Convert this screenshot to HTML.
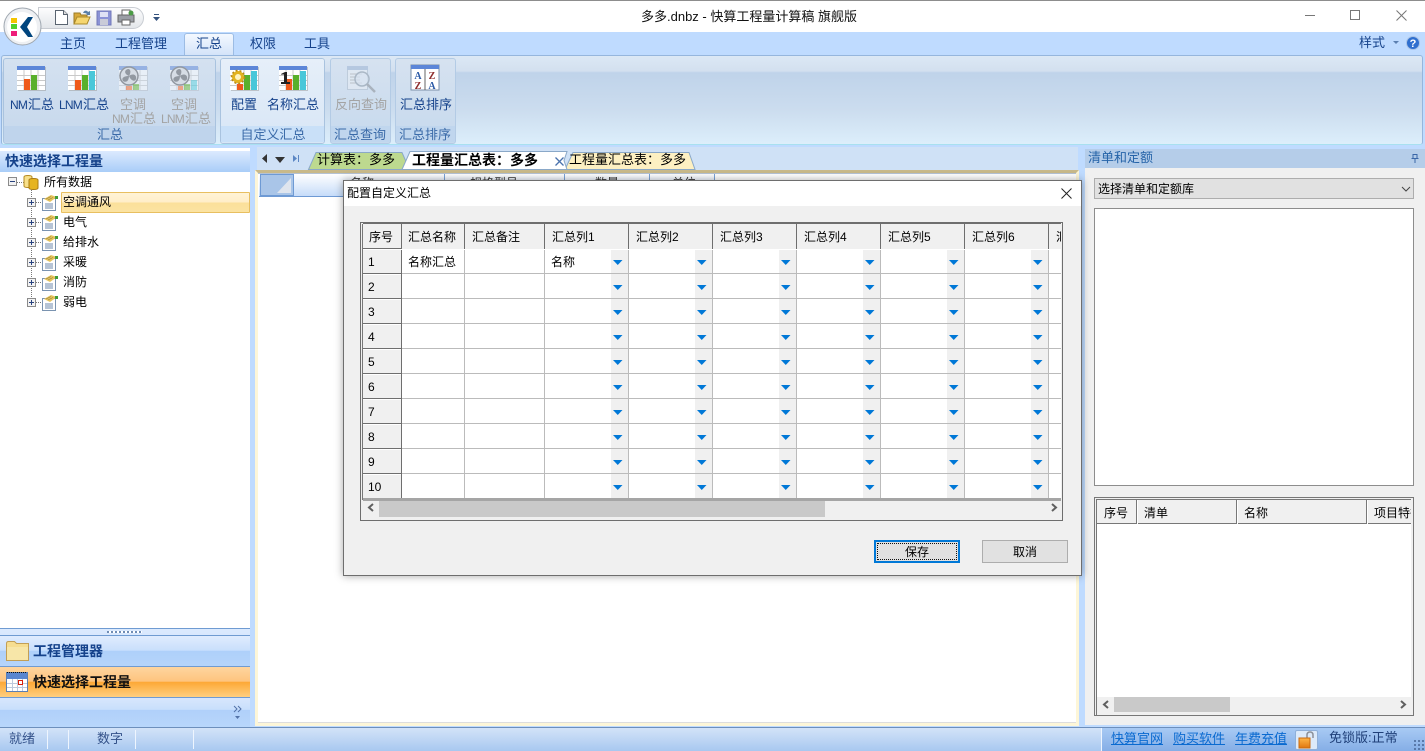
<!DOCTYPE html>
<html lang="zh"><head><meta charset="utf-8"><title>多多.dnbz</title>
<style>
html,body{margin:0;padding:0;width:1425px;height:751px;overflow:hidden;background:#bfdbff}
body{position:relative;font:12px/1 "Liberation Sans","WenQuanYi Zen Hei","Noto Sans CJK SC",sans-serif;color:#000}
.a{position:absolute}
.t{position:absolute;white-space:nowrap;line-height:14px}
.c{transform:translateX(-50%)}
.r{font-size:13px}
.r i{font-style:normal;font-size:12px;letter-spacing:-.8px;margin-right:1px}
.b{color:#15428b}
.g{color:#a3a3a3}
.h{font-weight:bold;font-size:14px;color:#15428b}
u{color:#0a6ad0}
svg{position:absolute;overflow:visible}
</style></head><body>
<svg width="0" height="0" style="left:0;top:0">
<defs>
<symbol id="tb" viewBox="0 0 29 25"><rect x="1" y="1" width="28" height="24" fill="#999" opacity=".5"/><rect width="28" height="24" fill="#fff"/><path d="M0 9.500h28M0 14.500h28M0 19.500h28M7 4v20M14 4v20M21 4v20" stroke="#c9c9c9"/><rect width="28" height="4" fill="#5c86d8"/></symbol>
<symbol id="fan" viewBox="0 0 29 25" opacity=".5"><use href="#tb" width="29" height="25"/><circle cx="10" cy="10" r="9" fill="#ddd" stroke="#555" stroke-width="1.500"/><path d="M10 10C5 8 5 4 9 3c3 0 3 4 1 7zM10 10c4-3 8-1 7 3-1 3-5 2-7-3zM10 10c0 5-3 7-6 5-2-3 1-5 6-5z" fill="#555"/></symbol>
<symbol id="tree" viewBox="0 0 16 16"><rect x=".5" y="3.500" width="13" height="12" fill="#fff" stroke="#7a93b0"/><path d="M3 9h8M3 11h8M3 13h8" stroke="#6d88ad"/><path d="M2 4 9 0 l6 2-7 5z" fill="#e6c35c"/><path d="M4 4l5-2.500M6 5l5-2.500" stroke="#97803a" stroke-width=".6"/><rect x="13" y="1" width="3" height="3" fill="#3f9b38"/></symbol>
<symbol id="plus" viewBox="0 0 9 9"><rect x=".5" y=".5" width="8" height="8" fill="#f2f2f2" stroke="#8a8a8a"/><path d="M2 4.500h5M4.500 2v5" stroke="#28427e"/></symbol>
<pattern id="cell" patternUnits="userSpaceOnUse" x="545" y="249" width="84" height="25"><rect x="66" width="17" height="25" fill="#f0f0f0"/><path d="M83.500 0v25M0 24.500h84" stroke="#bbb"/><path d="M68 11h9.500l-4.750 5z" fill="#0078d7"/></pattern>
<linearGradient id="or" x1="0" y1="0" x2="0" y2="1"><stop offset="0" stop-color="#ffb648"/><stop offset="1" stop-color="#e07710"/></linearGradient>
</defs></svg>

<!-- title bar -->
<div class="a" style="left:0;top:0;width:1425px;height:32px;background:#fff"></div>
<div class="a" style="left:0;top:0;width:1425px;height:1px;background:#8d8d8d"></div>
<div class="t" style="left:641px;top:10px;font-size:13px;color:#111">多多.dnbz - 快算工程量计算稿 旗舰版</div>
<div class="a" style="left:1305px;top:15px;width:10px;height:1px;background:#777"></div>
<div class="a" style="left:1350px;top:10px;width:8px;height:8px;border:1px solid #777"></div>
<svg style="left:1396px;top:10px" width="11" height="11"><path d="M.5.500l10 10M10.500.500l-10 10" stroke="#777" fill="none"/></svg>

<!-- tab strip -->
<div class="a" style="left:0;top:32px;width:1425px;height:25px;background:#bfdbff"></div>
<div class="a" style="left:184px;top:33px;width:48px;height:24px;background:linear-gradient(#f4f9ff,#cfe1f8);border:1px solid #9cbce4;border-bottom:0;border-radius:3px 3px 0 0"></div>
<div class="t b" style="left:60px;top:37px;font-size:13px">主页</div>
<div class="t b" style="left:115px;top:37px;font-size:13px">工程管理</div>
<div class="t b" style="left:196px;top:37px;font-size:13px">汇总</div>
<div class="t b" style="left:250px;top:37px;font-size:13px">权限</div>
<div class="t b" style="left:304px;top:37px;font-size:13px">工具</div>
<div class="t b" style="left:1359px;top:36px;font-size:13px">样式</div>
<svg style="left:1393px;top:41px" width="7" height="4"><path d="M0 0h6L3 3z" fill="#5b7fb0"/></svg>
<svg style="left:1406px;top:36px" width="15" height="15"><circle cx="7" cy="7" r="6.500" fill="#2f6fcf" stroke="#a9c3e6"/><text x="7" y="11" font-size="11" font-weight="bold" text-anchor="middle" fill="#fff" font-family="Liberation Sans">?</text></svg>

<!-- ribbon -->
<div class="a" style="left:1px;top:55px;width:1420px;height:88px;border:1px solid #96b6dd;border-radius:3px;background:linear-gradient(#dce8f5 0,#d3e0ef 17%,#bfd3ea 19%,#cbdcee 60%,#dceefb 100%);border-bottom-color:#a8e0f0"></div>

<div class="a" style="left:3px;top:58px;width:211px;height:84px;border:1px solid #a9c3df;border-radius:3px;background:linear-gradient(#d4e1f0,#c6d8ec)"></div>
<div class="a" style="left:4px;top:126px;width:211px;height:16px;background:#bfd4ec"></div>
<div class="a" style="left:220px;top:58px;width:103px;height:84px;border:1px solid #fff;outline:1px solid #a9c3df;outline-offset:-1px;border-radius:3px;background:linear-gradient(#e6eff9,#d8e6f6)"></div>
<div class="a" style="left:221px;top:126px;width:103px;height:16px;background:#c9e0f8"></div>
<div class="a" style="left:330px;top:58px;width:59px;height:84px;border:1px solid #b3cbe5;border-radius:3px;background:linear-gradient(#d6e2f0,#c6d9ed)"></div>
<div class="a" style="left:331px;top:126px;width:59px;height:16px;background:#c0d6ee"></div>
<div class="a" style="left:395px;top:58px;width:59px;height:84px;border:1px solid #b3cbe5;border-radius:3px;background:linear-gradient(#d6e2f0,#c6d9ed)"></div>
<div class="a" style="left:396px;top:126px;width:59px;height:16px;background:#c0d6ee"></div>

<!-- ribbon icons -->
<svg style="left:17px;top:66px" width="29" height="25"><use href="#tb" width="29" height="25"/><rect x="7" y="13" width="6" height="11" fill="#ef5a1a"/><rect x="14" y="9" width="6" height="15" fill="#59b02c"/></svg>
<svg style="left:68px;top:66px" width="29" height="25"><use href="#tb" width="29" height="25"/><rect x="7" y="14" width="6" height="10" fill="#ef5a1a"/><rect x="14" y="9" width="6" height="15" fill="#59b02c"/><rect x="21" y="5" width="6" height="19" fill="#49c7d9"/></svg>
<svg style="left:119px;top:66px" width="29" height="25"><use href="#fan" width="29" height="25"/><rect x="7" y="20" width="6" height="4" fill="#ef5a1a" opacity=".5"/><rect x="14" y="18" width="6" height="6" fill="#59b02c" opacity=".5"/></svg>
<svg style="left:170px;top:66px" width="29" height="25"><use href="#fan" width="29" height="25"/><rect x="8" y="20" width="5" height="4" fill="#ef5a1a" opacity=".5"/><rect x="14" y="18" width="6" height="6" fill="#59b02c" opacity=".5"/><rect x="21" y="14" width="6" height="10" fill="#49c7d9" opacity=".5"/></svg>
<svg style="left:230px;top:66px" width="29" height="25"><use href="#tb" width="29" height="25"/><rect x="7" y="18" width="6" height="6" fill="#ef5a1a"/><rect x="14" y="9" width="6" height="15" fill="#59b02c"/><rect x="21" y="5" width="6" height="19" fill="#49c7d9"/><circle cx="8" cy="11" r="4.500" fill="#fff4c0" stroke="#e3b31f" stroke-width="3"/><circle cx="8" cy="11" r="6.500" fill="none" stroke="#b88a15" stroke-width="1.500" stroke-dasharray="2 2"/></svg>
<svg style="left:279px;top:66px" width="29" height="25"><use href="#tb" width="29" height="25"/><rect x="7" y="13" width="6" height="11" fill="#ef5a1a"/><rect x="14" y="9" width="6" height="15" fill="#59b02c"/><rect x="21" y="5" width="6" height="19" fill="#49c7d9"/><path d="M2 8l4-2h2v10h3v2H2v-2h3V8.500H2z" fill="#222"/></svg>
<svg style="left:347px;top:66px;opacity:.55" width="30" height="28"><rect x=".5" y=".5" width="20" height="23" fill="#e9eff6" stroke="#aebccb"/><rect width="21" height="4" fill="#9db4d4"/><path d="M3 8h12M3 11h10M3 14h10M3 17h12" stroke="#aaa"/><circle cx="15" cy="13" r="7" fill="#dbe7f2" fill-opacity=".7" stroke="#8a97a5" stroke-width="1.500"/><path d="M20 18l8 8" stroke="#8a8f96" stroke-width="2.500"/></svg>
<svg style="left:411px;top:65px" width="29" height="26"><rect width="28" height="25" fill="#fff" stroke="#7b8fa8"/><rect width="28" height="4" fill="#5c86d8"/><path d="M14 4v21" stroke="#666"/><g font-family="Liberation Serif" font-weight="bold" font-size="10" text-anchor="middle"><text x="7" y="14" fill="#2a59a6">A</text><text x="21" y="14" fill="#8e2d2d">Z</text><text x="7" y="24" fill="#8e2d2d">Z</text><text x="21" y="24" fill="#2a59a6">A</text></g></svg>

<!-- ribbon labels -->
<div class="t r b c" style="left:32px;top:98px"><i>NM</i>汇总</div>
<div class="t r b c" style="left:84px;top:98px"><i>LNM</i>汇总</div>
<div class="t r g c" style="left:133px;top:98px">空调</div>
<div class="t r g c" style="left:134px;top:112px"><i>NM</i>汇总</div>
<div class="t r g c" style="left:184px;top:98px">空调</div>
<div class="t r g c" style="left:186px;top:112px"><i>LNM</i>汇总</div>
<div class="t r b c" style="left:244px;top:98px">配置</div>
<div class="t r b c" style="left:293px;top:98px">名称汇总</div>
<div class="t r g c" style="left:361px;top:98px">反向查询</div>
<div class="t r b c" style="left:426px;top:98px">汇总排序</div>
<div class="t r c" style="left:110px;top:128px;color:#3a6aa8">汇总</div>
<div class="t r c" style="left:273px;top:128px;color:#3a6aa8">自定义汇总</div>
<div class="t r c" style="left:360px;top:128px;color:#3a6aa8">汇总查询</div>
<div class="t r c" style="left:425px;top:128px;color:#3a6aa8">汇总排序</div>

<!-- QAT + app button -->
<div class="a" style="left:38px;top:7px;width:104px;height:20px;border:1px solid #c8ccd2;border-radius:0 11px 11px 0;background:linear-gradient(#fdfdfe,#e3e6ea)"></div>
<svg style="left:55px;top:10px" width="14" height="16"><path d="M.5.500h8l4 4v10H.5z" fill="#fff" stroke="#5a6470"/><path d="M8.500.500v4h4" fill="#ddd" stroke="#5a6470"/></svg>
<svg style="left:74px;top:9px" width="17" height="16"><path d="M0 4h6l1 2h6v9H0z" fill="#d8a93a" stroke="#9a7a25"/><path d="M0 15l3-7h13l-3 7z" fill="#f6d66f" stroke="#ab8a2b"/><path d="M9 4c1-3 4-3 5-1l2-1v4h-4l1-1c-1-1-3-1-4-1z" fill="#5a80a8"/></svg>
<svg style="left:97px;top:11px" width="14" height="14"><rect width="14" height="14" fill="#8b93d6" stroke="#7077b8"/><rect x="3" y="1" width="8" height="5" fill="#dfe2f5"/><rect x="3" y="8" width="8" height="6" fill="#c9cbd8"/></svg>
<svg style="left:118px;top:10px" width="17" height="16"><rect x="4" y="0" width="8" height="6" fill="#fff" stroke="#666"/><rect x="0" y="5" width="16" height="7" fill="#9a9ea5" stroke="#666"/><rect x="4" y="10" width="8" height="5" fill="#fff" stroke="#666"/><circle cx="13" cy="3" r="2.500" fill="#4b9b45"/></svg>
<svg style="left:153px;top:14px" width="7" height="8"><path d="M1 .500h5" stroke="#34527e"/><path d="M0 3h7L3.500 7z" fill="#34527e"/></svg>
<svg style="left:3px;top:7px" width="39" height="39"><circle cx="19.500" cy="19.500" r="18.500" fill="#eef0f3" stroke="#9fa7b0"/><circle cx="19" cy="20" r="15" fill="#fff"/><rect x="8" y="11" width="6" height="5" fill="#f4c400"/><rect x="8" y="17" width="6" height="5" fill="#4fd12c"/><rect x="8" y="24" width="6" height="5" fill="#ee1e7a"/><path d="M25 10h5l-6 10 6 10h-5l-8-10z" fill="#00457e"/></svg>

<!-- left panel -->
<div class="a" style="left:0;top:148px;width:250px;height:579px;background:#fff"></div>
<div class="a" style="left:0;top:151px;width:250px;height:21px;background:linear-gradient(#dceafe,#a9cdf8)"></div>
<div class="t h" style="left:5px;top:154px">快速选择工程量</div>
<svg style="left:0;top:172px" width="60" height="135"><path d="M31.500 18V130" stroke="#777" stroke-dasharray="1 1"/><path d="M17 10.500h7M36 30.500h5M36 50.500h5M36 70.500h5M36 90.500h5M36 110.500h5M36 130.500h5" stroke="#777" stroke-dasharray="1 1"/></svg>
<svg style="left:8px;top:177px" width="9" height="9"><rect x=".5" y=".5" width="8" height="8" fill="#f2f2f2" stroke="#8a8a8a"/><path d="M2 4.500h5" stroke="#28427e"/></svg>
<svg style="left:23px;top:175px" width="17" height="15"><path d="M1 2c0-2 8-2 8 0v9c0 2-8 2-8 0z" fill="#f8e08a" stroke="#b58a20"/><path d="M6 5c0-2 9-2 9 0v8c0 2-9 2-9 0z" fill="#e6b422" stroke="#a97b14"/></svg>
<div class="t" style="left:44px;top:175px">所有数据</div>
<div class="a" style="left:61px;top:192px;width:187px;height:19px;border:1px solid #e8bf60;border-radius:1px;background:linear-gradient(#fff3d6 0,#ffeec8 50%,#fbe09a 51%,#fbe3a2 100%)"></div>
<svg style="left:27px;top:198px" width="9" height="9"><use href="#plus" width="9" height="9"/></svg>
<svg style="left:27px;top:218px" width="9" height="9"><use href="#plus" width="9" height="9"/></svg>
<svg style="left:27px;top:238px" width="9" height="9"><use href="#plus" width="9" height="9"/></svg>
<svg style="left:27px;top:258px" width="9" height="9"><use href="#plus" width="9" height="9"/></svg>
<svg style="left:27px;top:278px" width="9" height="9"><use href="#plus" width="9" height="9"/></svg>
<svg style="left:27px;top:298px" width="9" height="9"><use href="#plus" width="9" height="9"/></svg>
<svg style="left:42px;top:195px" width="16" height="16"><use href="#tree" width="16" height="16"/></svg>
<svg style="left:42px;top:215px" width="16" height="16"><use href="#tree" width="16" height="16"/></svg>
<svg style="left:42px;top:235px" width="16" height="16"><use href="#tree" width="16" height="16"/></svg>
<svg style="left:42px;top:255px" width="16" height="16"><use href="#tree" width="16" height="16"/></svg>
<svg style="left:42px;top:275px" width="16" height="16"><use href="#tree" width="16" height="16"/></svg>
<svg style="left:42px;top:295px" width="16" height="16"><use href="#tree" width="16" height="16"/></svg>
<div class="t" style="left:63px;top:195px">空调通风</div>
<div class="t" style="left:63px;top:215px">电气</div>
<div class="t" style="left:63px;top:235px">给排水</div>
<div class="t" style="left:63px;top:255px">采暖</div>
<div class="t" style="left:63px;top:275px">消防</div>
<div class="t" style="left:63px;top:295px">弱电</div>

<div class="a" style="left:0;top:628px;width:250px;height:99px;background:linear-gradient(#dceafe,#aecff9)"></div>
<div class="a" style="left:0;top:628px;width:250px;height:1px;background:#6f9bd2"></div>
<div class="a" style="left:107px;top:631px;width:35px;height:2px;background:repeating-linear-gradient(90deg,#6f8cb5 0 2px,#fff 2px 4px)"></div>
<div class="a" style="left:0;top:635px;width:250px;height:32px;border-top:1px solid #6f9bd2;border-bottom:1px solid #6f9bd2;box-sizing:border-box;background:linear-gradient(#e0ecfe 0,#c9dffc 48%,#aed0fa 50%,#b5d4fb 100%)"></div>
<div class="a" style="left:0;top:667px;width:250px;height:31px;border-bottom:1px solid #6f9bd2;box-sizing:border-box;background:linear-gradient(#fed59f 0,#fec47e 48%,#fda835 50%,#ffcf7f 100%)"></div>
<div class="a" style="left:0;top:698px;width:250px;height:29px;background:linear-gradient(#d8e7fd 0,#c8dffc 40%,#b0d0fa 42%,#b8d6fb 100%)"></div>
<svg style="left:6px;top:641px" width="23" height="20"><path d="M.5 2.500q0-2 2-2h6l2 2h12v17H.5z" fill="#f6dd90" stroke="#c29f56"/><path d="M1 6h21v13H1z" fill="#f7e6a8"/></svg>
<svg style="left:6px;top:672px" width="22" height="20"><rect x=".5" y=".5" width="21" height="19" fill="#fff" stroke="#5a7fb5"/><rect x="1" y="1" width="20" height="6" fill="#5a86d0"/><path d="M1 .500h20" stroke="#111" stroke-dasharray="1 1"/><path d="M1 11.500h20M1 15.500h20M6.500 7v12M11.500 7v12M16.500 7v12" stroke="#bcc9dc"/><rect x="12.500" y="8.500" width="4" height="4" fill="#fff" stroke="#d8200c"/></svg>
<div class="t h" style="left:33px;top:644px">工程管理器</div>
<div class="t h" style="left:33px;top:675px;color:#111">快速选择工程量</div>
<svg style="left:233px;top:705px" width="9" height="15"><path d="M1 1l3 3-3 3M5 1l3 3-3 3" fill="none" stroke="#5272a8"/><path d="M2 11h5l-2.500 3z" fill="#5272a8"/></svg>

<!-- centre document -->
<div class="a" style="left:257px;top:147px;width:821px;height:24px;background:#cfe1f6"></div>
<svg style="left:259px;top:153px" width="50" height="12"><path d="M8 1v9L3 5.500z" fill="#333"/><path d="M16 4h10l-5 6z" fill="#333"/><path d="M34 2l4 3.500-4 3.500z" fill="#5b86c4"/><path d="M39.500 2v7" stroke="#5b86c4"/></svg>
<div class="a" style="left:255px;top:170px;width:824px;height:556px;box-sizing:border-box;border:3px solid #fdf6d8;border-top:3px solid #c8b98a;background:#fff"></div>
<div class="a" style="left:258px;top:173px;width:818px;height:1px;background:#b4c2d4"></div>
<div class="a" style="left:258px;top:722px;width:818px;height:1px;background:#ddd"></div>
<div class="a" style="left:259px;top:174px;width:456px;height:22px;background:linear-gradient(#fff,#c6dcf9);border-bottom:1px solid #6e9ad4"></div>
<div class="a" style="left:260px;top:174px;width:34px;height:22px;background:#a9c5e8;border:1px solid #6e9ad4;box-sizing:border-box"></div>
<svg style="left:277px;top:178px" width="14" height="15"><path d="M14 0v15H0z" fill="#dfe5ee"/></svg>
<div class="a" style="left:444px;top:174px;width:1px;height:22px;background:#7aa3d8"></div>
<div class="a" style="left:564px;top:174px;width:1px;height:22px;background:#7aa3d8"></div>
<div class="a" style="left:649px;top:174px;width:1px;height:22px;background:#7aa3d8"></div>
<div class="a" style="left:714px;top:174px;width:1px;height:22px;background:#7aa3d8"></div>
<div class="t" style="left:350px;top:176px;color:#333">名称</div>
<div class="t" style="left:470px;top:176px;color:#333">规格型号</div>
<div class="t" style="left:595px;top:176px;color:#333">数量</div>
<div class="t" style="left:672px;top:176px;color:#333">单位</div>
<svg style="left:305px;top:151px" width="395" height="20"><path d="M3.500 18.500L11 1.500H97l4 9-4 8z" fill="#bdd98f" stroke="#8aa8c8"/><path d="M260 18.500L268 1.500H384l6 17z" fill="#fdf0c2" stroke="#8aa8c8"/><path d="M97 18.500L105 .5H262l-3 9 3 9z" fill="#fff" stroke="#8aa8c8"/></svg>
<div class="t" style="left:317px;top:153px;font-size:13px">计算表：多多</div>
<div class="t" style="left:412px;top:153px;font-size:14px;font-weight:bold">工程量汇总表：多多</div>
<div class="t" style="left:569px;top:153px;font-size:13px">工程量汇总表：多多</div>
<svg style="left:555px;top:157px" width="9" height="9"><path d="M.5.500l8 8M8.500.500l-8 8" stroke="#4a72ad" stroke-width="1.300"/></svg>

<!-- right panel -->
<div class="a" style="left:1085px;top:149px;width:340px;height:576px;background:#f0f0f0"></div>
<div class="a" style="left:1085px;top:149px;width:340px;height:19px;background:#b5cde9"></div>
<div class="t" style="left:1088px;top:151px;font-size:13px;color:#2563a8">清单和定额</div>
<svg style="left:1411px;top:154px" width="8" height="9"><path d="M2 .500h4v4H2zM.5 4.500h7M4 5v4" fill="none" stroke="#3a66a8"/></svg>
<div class="a" style="left:1094px;top:178px;width:318px;height:19px;background:#e1e1e1;border:1px solid #adadad"></div>
<div class="t" style="left:1098px;top:182px">选择清单和定额库</div>
<svg style="left:1401px;top:186px" width="10" height="6"><path d="M1 1l4 4 4-4" fill="none" stroke="#444"/></svg>
<div class="a" style="left:1094px;top:208px;width:318px;height:276px;background:#fff;border:1px solid #8d8d8d"></div>

<svg style="left:0;top:0" width="1425" height="751">
<rect x="1094.500" y="497.500" width="319" height="218" fill="#f0f0f0" stroke="#777"/>
<rect x="1097" y="500" width="314" height="213" fill="#fff"/>
<rect x="1097" y="500" width="314" height="24" fill="#f0f0f0"/>
<path d="M1096.500 499v216M1097 499.500H1411M1097 523.500H1411M1136.500 500v24M1236.500 500v24M1366.500 500v24" stroke="#777"/>
<path d="M1137.500 500v24M1237.500 500v24M1367.500 500v24" stroke="#fff"/>
<rect x="1097" y="697" width="314" height="16" fill="#f0f0f0"/>
<rect x="1114" y="697" width="116" height="15" fill="#c9c9c9"/>
<path d="M1108 701l-4 3.500 4 3.500M1401 701l4 3.500-4 3.500" fill="none" stroke="#606060" stroke-width="2"/>
</svg>
<div class="t" style="left:1104px;top:506px">序号</div>
<div class="t" style="left:1144px;top:506px">清单</div>
<div class="t" style="left:1244px;top:506px">名称</div>
<div class="t" style="left:1374px;top:506px;width:37px;overflow:hidden">项目特征</div>

<!-- status bar -->
<div class="a" style="left:0;top:727px;width:1425px;height:24px;border-top:1px solid #6d8fbc;box-sizing:border-box;background:linear-gradient(#d3e3f8,#a8c8f0)"></div>
<div class="a" style="left:1101px;top:728px;width:324px;height:23px;background:linear-gradient(#a8caf4,#85aee6)"></div>
<div class="a" style="left:47px;top:730px;width:1px;height:19px;background:#eef5fe"></div>
<div class="a" style="left:68px;top:730px;width:1px;height:19px;background:#eef5fe"></div>
<div class="a" style="left:135px;top:730px;width:1px;height:19px;background:#eef5fe"></div>
<div class="a" style="left:193px;top:730px;width:1px;height:19px;background:#eef5fe"></div>
<div class="a" style="left:1101px;top:728px;width:1px;height:23px;background:#eef5fe"></div>
<div class="t" style="left:9px;top:732px;font-size:13px;color:#34528a">就绪</div>
<div class="t" style="left:97px;top:732px;font-size:13px;color:#34528a">数字</div>
<div class="t" style="left:1111px;top:732px;font-size:13px"><u>快算官网</u></div>
<div class="t" style="left:1173px;top:732px;font-size:13px"><u>购买软件</u></div>
<div class="t" style="left:1235px;top:732px;font-size:13px"><u>年费充值</u></div>
<div class="a" style="left:1295px;top:730px;width:21px;height:18px;background:#dceafa;border:1px solid #8fb0da;border-radius:2px"></div>
<svg style="left:1298px;top:731px" width="18" height="18"><path d="M9 8V4q0-3 3-3t3 3v3" fill="none" stroke="#8b9099" stroke-width="1.500"/><rect x="1" y="7" width="11" height="10" fill="url(#or)" stroke="#c96a10"/></svg>
<div class="t" style="left:1329px;top:731px;font-size:13px;color:#1f3f78">免锁版:正常</div>
<div class="a" style="left:1413px;top:739px;width:11px;height:11px;background:radial-gradient(#4f6e9e 1px,transparent 1.100px) 0 0/4px 4px"></div>

<!-- dialog -->
<div class="a" style="left:343px;top:180px;width:737px;height:394px;background:#f0f0f0;border:1px solid #6e6e6e;box-shadow:0 0 8px rgba(0,0,0,.35)"></div>
<div class="a" style="left:344px;top:181px;width:737px;height:25px;background:#fff"></div>
<div class="t" style="left:347px;top:186px">配置自定义汇总</div>
<svg style="left:1061px;top:188px" width="11" height="11"><path d="M.5.500l10 10M10.500.500l-10 10" stroke="#222" fill="none"/></svg>

<svg style="left:0;top:0" width="1425" height="751">
<rect x="360.500" y="222.500" width="702" height="298" fill="#f0f0f0" stroke="#6e6e6e"/>
<path d="M362.500 224v276" stroke="#777"/>
<rect x="363" y="224" width="698" height="25" fill="#f0f0f0"/>
<rect x="402" y="249" width="659" height="250" fill="#fff"/>
<rect x="545" y="249" width="504" height="250" fill="url(#cell)"/>
<path d="M402 273.500H545M402 298.500H545M402 323.500H545M402 348.500H545M402 373.500H545M402 398.500H545M402 423.500H545M402 448.500H545M402 473.500H545M1049 273.500H1061M1049 298.500H1061M1049 323.500H1061M1049 348.500H1061M1049 373.500H1061M1049 398.500H1061M1049 423.500H1061M1049 448.500H1061M1049 473.500H1061M464.500 249V499" stroke="#bbb"/>
<path d="M544.500 249V499" stroke="#bbb"/>
<path d="M363 223.500H1061M401.500 224V249M464.500 224V249M544.500 224V249M628.500 224V249M712.500 224V249M796.500 224V249M880.500 224V249M964.500 224V249M1048.500 224V249M401.500 249V499" stroke="#6e6e6e"/>
<path d="M363 248.500H402M363 273.500H402M363 298.500H402M363 323.500H402M363 348.500H402M363 373.500H402M363 398.500H402M363 423.500H402M363 448.500H402M363 473.500H402M363 498.500H402" stroke="#6e6e6e"/>
<path d="M363 274.500H401M363 299.500H401M363 324.500H401M363 349.500H401M363 374.500H401M363 399.500H401M363 424.500H401M363 449.500H401M363 474.500H401" stroke="#fff"/>
<path d="M363 249.500H1061" stroke="#fff"/>
<rect x="363" y="498" width="698" height="3" fill="#a5a5a5"/>
<rect x="379" y="501" width="446" height="16" fill="#c9c9c9"/>
<path d="M373 504l-4 3.500 4 3.500M1052 504l4 3.500-4 3.500" fill="none" stroke="#606060" stroke-width="2"/>
</svg>
<div class="t" style="left:369px;top:230px">序号</div>
<div class="t" style="left:408px;top:230px">汇总名称</div>
<div class="t" style="left:472px;top:230px">汇总备注</div>
<div class="t" style="left:552px;top:230px">汇总列1</div>
<div class="t" style="left:636px;top:230px">汇总列2</div>
<div class="t" style="left:720px;top:230px">汇总列3</div>
<div class="t" style="left:804px;top:230px">汇总列4</div>
<div class="t" style="left:888px;top:230px">汇总列5</div>
<div class="t" style="left:972px;top:230px">汇总列6</div>
<div class="t" style="left:1056px;top:230px;width:5px;overflow:hidden">汇</div>
<div class="t" style="left:368px;top:255px">1</div>
<div class="t" style="left:368px;top:280px">2</div>
<div class="t" style="left:368px;top:305px">3</div>
<div class="t" style="left:368px;top:330px">4</div>
<div class="t" style="left:368px;top:355px">5</div>
<div class="t" style="left:368px;top:380px">6</div>
<div class="t" style="left:368px;top:405px">7</div>
<div class="t" style="left:368px;top:430px">8</div>
<div class="t" style="left:368px;top:455px">9</div>
<div class="t" style="left:368px;top:480px">10</div>
<div class="t" style="left:408px;top:255px">名称汇总</div>
<div class="t" style="left:551px;top:255px">名称</div>

<div class="a" style="left:874px;top:540px;width:80px;height:17px;background:#e1e1e1;border:2px solid #0078d7;padding:1px;box-sizing:content-box"></div>
<div class="a" style="left:877px;top:543px;width:80px;height:17px;border:1px dotted #111;box-sizing:border-box"></div>
<div class="t" style="left:905px;top:545px">保存</div>
<div class="a" style="left:982px;top:540px;width:84px;height:21px;background:#e1e1e1;border:1px solid #adadad"></div>
<div class="t" style="left:1013px;top:545px">取消</div>
</body></html>
